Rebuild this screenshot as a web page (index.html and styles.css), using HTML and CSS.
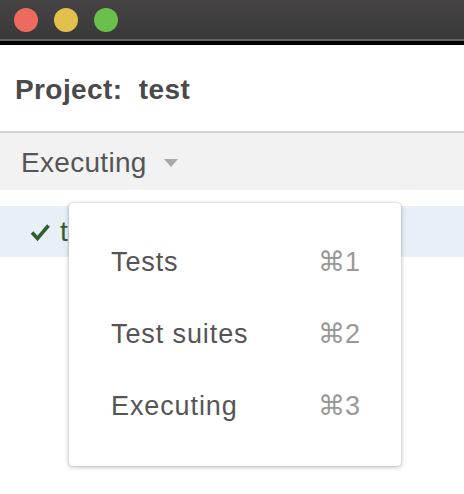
FILE: index.html
```html
<!DOCTYPE html>
<html>
<head>
<meta charset="utf-8">
<link rel="stylesheet" href="styles.css">
</head>
<body>
<div class="window">
  <div class="titlebar">
    <span class="light red"></span>
    <span class="light yellow"></span>
    <span class="light green"></span>
  </div>
  <div class="blackbar"></div>
  <div class="header">Project:&nbsp; test</div>
  <div class="toolbar">
    <span class="mode">Executing</span>
    <span class="caret"></span>
  </div>
  <div class="content">
    <div class="row">
      <svg class="check" width="20" height="18" viewBox="0 0 20 18"><polyline points="2,9.5 7.5,15.5 18.5,2.5" fill="none" stroke="#2f5f2f" stroke-width="3.6" stroke-linecap="butt" stroke-linejoin="miter"/></svg>
      <span class="rowtext">test</span>
    </div>
    <div class="menu">
      <div class="item"><span>Tests</span><span class="key">⌘1</span></div>
      <div class="item"><span>Test suites</span><span class="key">⌘2</span></div>
      <div class="item"><span>Executing</span><span class="key">⌘3</span></div>
    </div>
  </div>
</div>
</body>
</html>
```

FILE: styles.css
```css
html, body {
  margin: 0;
  padding: 0;
  background: #ffffff;
}
body {
  width: 464px;
  height: 494px;
  overflow: hidden;
  font-family: "Liberation Sans", "DejaVu Sans", Arial, sans-serif;
}
.window {
  width: 464px;
  height: 494px;
  background: #ffffff;
  position: relative;
}
.titlebar {
  background: linear-gradient(#454344, #3a393a);
  border-bottom: 2px solid #666566;
  display: flex;
  align-items: center;
  padding-left: 14px;
  gap: 16px;
  padding-top: 1px;
  height: 38px;
}
.light {
  width: 24px;
  height: 24px;
  border-radius: 50%;
  display: block;
}
.red { background: #ed6a5e; }
.yellow { background: #e2c04b; }
.green { background: #6ac04a; }
.blackbar {
  height: 4px;
  background: #000000;
}
.header {
  padding: 4px 0 0 15px;
  height: 82px;
  line-height: 82px;
  font-size: 28px;
  font-weight: bold;
  letter-spacing: 0.4px;
  color: #4a4a4a;
  border-bottom: 2px solid #d3d3d3;
}
.toolbar {
  background: #f2f2f2;
  padding: 3px 0 0 21px;
  height: 54px;
  display: flex;
  align-items: flex-start;
}
.mode {
  font-size: 28px;
  line-height: 54px;
  letter-spacing: 0.3px;
  color: #555555;
}
.caret {
  width: 0;
  height: 0;
  border-left: 7.5px solid transparent;
  border-right: 7.5px solid transparent;
  border-top: 8px solid #a9a9a9;
  margin-left: 17px;
  margin-top: 23px;
}
.content {
  position: relative;
  padding-top: 16px;
}
.row {
  height: 51px;
  background: #e8eff7;
  display: flex;
  align-items: center;
  padding-left: 30px;
}
.check {
  display: block;
  margin-top: 1px;
}
.rowtext {
  margin-left: 10px;
  font-size: 28px;
  color: #2f5f2f;
}
.menu {
  position: absolute;
  left: 69px;
  top: 13px;
  width: 332px;
  box-sizing: border-box;
  padding: 23px 41px 24px 42px;
  background: #ffffff;
  border-radius: 4px;
  box-shadow: 0 0 1px rgba(0,0,0,0.25), 0 1px 5px rgba(0,0,0,0.28);
}
.item {
  display: flex;
  justify-content: space-between;
  font-size: 27px;
  line-height: 72px;
  height: 72px;
  letter-spacing: 0.9px;
  color: #555555;
}
.key {
  color: #999999;
  letter-spacing: 0;
}
```
